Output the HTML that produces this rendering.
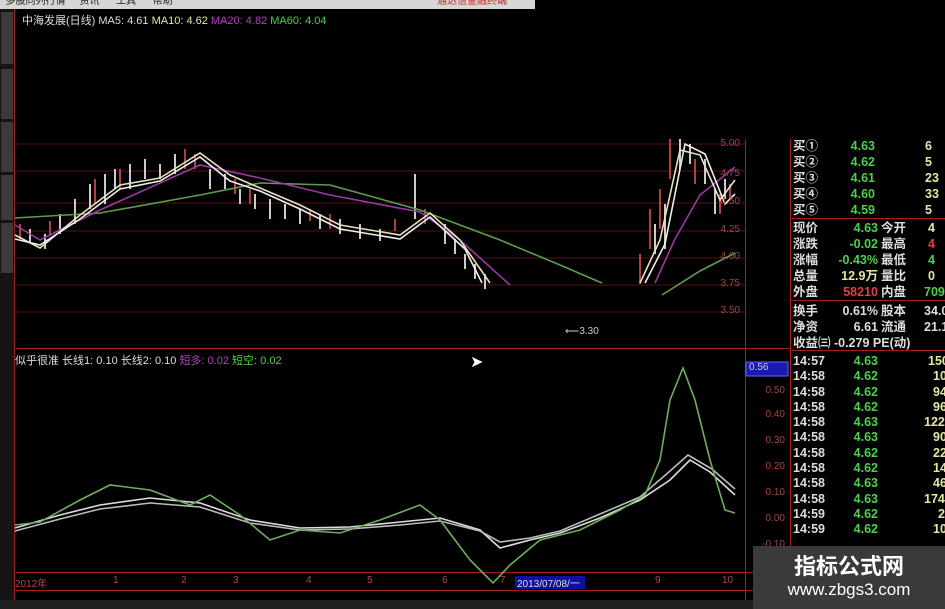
<!DOCTYPE html>
<html><head><meta charset="utf-8"><style>
body{margin:0;width:945px;height:609px;overflow:hidden;background:#000;font-family:"Liberation Sans","Noto Sans CJK SC",sans-serif;position:relative}
.a{position:absolute;white-space:nowrap}
.r{font-size:12.5px;font-weight:bold;line-height:15px}
.w{color:#ddd}.g{color:#4cd04c}.y{color:#e6e6a0}.rd{color:#e04040}
.ax{color:#a04848;font-size:10px;text-align:right;width:40px}
</style></head><body>
<div class="a" style="left:0;top:0;width:535px;height:9px;background:#d6d6d2;font-size:10px;line-height:4px;overflow:hidden;color:#222">&nbsp;&nbsp;多股同列行情 &nbsp;&nbsp;&nbsp;&nbsp;资讯&nbsp;&nbsp;&nbsp;&nbsp;&nbsp;&nbsp;工具&nbsp;&nbsp;&nbsp;&nbsp;&nbsp;&nbsp;帮助<span style="position:absolute;left:437px;color:#c02020">通达信金融终端</span></div>
<svg class="a" style="left:0;top:9px" width="945" height="600">
<rect x="0" y="0" width="14" height="600" fill="#151515"/>
<g fill="#3a3a3a"><rect x="1" y="3" width="12" height="52"/><rect x="1" y="60" width="12" height="50"/><rect x="1" y="113" width="12" height="50"/><rect x="1" y="166" width="12" height="45"/><rect x="1" y="214" width="12" height="50"/></g>
<g stroke="#5a1010" stroke-width="1"><line x1="15" y1="135" x2="745" y2="135"/><line x1="15" y1="162" x2="745" y2="162"/><line x1="15" y1="194" x2="745" y2="194"/><line x1="15" y1="222" x2="745" y2="222"/><line x1="15" y1="249" x2="745" y2="249"/><line x1="15" y1="276" x2="745" y2="276"/><line x1="15" y1="303" x2="745" y2="303"/></g>
<g stroke="#a02020" stroke-width="1" fill="none"><line x1="14.5" y1="0" x2="14.5" y2="591"/><line x1="745.5" y1="130" x2="745.5" y2="591"/><line x1="790.5" y1="130" x2="790.5" y2="591"/><line x1="15" y1="339.5" x2="790" y2="339.5"/><line x1="15" y1="563.5" x2="790" y2="563.5"/><line x1="15" y1="581.5" x2="790" y2="581.5"/><line x1="790" y1="209.5" x2="945" y2="209.5"/><line x1="790" y1="291.5" x2="945" y2="291.5"/><line x1="790" y1="341.5" x2="945" y2="341.5"/></g>
<rect x="515" y="567" width="70" height="13" fill="#1010a0"/>
<rect x="746" y="353" width="42" height="14" fill="#1a1ab0" stroke="#6060ff"/>
<!-- candles -->
<g stroke="#ccc" stroke-width="2">
<path d="M30 220v14M45 225v15M60 205v20M75 190v25M90 175v25M105 165v30M115 160v20M130 155v25M145 150v20M160 155v15M175 145v20M210 160v20M225 165v15M240 180v15M255 185v15M270 190v20M285 195v15M300 200v15M320 205v15M340 210v15M360 215v15M380 220v12M415 165v45M445 215v20M455 230v15M465 245v15M475 255v15M485 265v15M655 215v30M665 195v45M680 130v30M690 135v20M705 150v25M715 180v25M725 170v20"/>
</g>
<g stroke="#b04040" stroke-width="2">
<path d="M20 215v15M50 212v15M95 170v25M120 160v20M185 140v20M195 145v15M235 170v15M250 180v15M310 200v12M330 205v15M395 210v12M425 200v15M640 245v30M650 200v40M660 180v40M670 130v40M695 150v25M720 185v20M730 175v15"/>
</g>
<g fill="none" stroke-width="1.6">
<polyline stroke="#5c9e4a" points="15,209 100,204 200,186 260,174 330,176 420,201 500,231 560,256 602,274"/>
<polyline stroke="#5c9e4a" points="662,286 700,262 735,244"/>
<polyline stroke="#9a3aa0" points="15,216 40,231 100,201 200,156 260,169 330,186 420,203 460,231 510,276"/>
<polyline stroke="#9a3aa0" points="655,274 675,230 700,186 735,158"/>
<polyline stroke="#e8e0c0" points="15,226 40,239 80,206 120,176 160,169 200,144 230,166 260,179 300,196 340,216 400,226 430,204 460,231 490,274"/>
<polyline stroke="#eee" points="15,230 40,236 80,210 120,180 160,172 200,148 230,172 260,182 300,200 340,220 400,230 430,208 465,240 482,274"/>
<polyline stroke="#e8e0c0" points="640,274 660,231 680,141 700,146 720,191 735,171"/>
<polyline stroke="#eee" points="645,274 665,235 685,135 705,145 725,195 735,185"/>
<!-- indicator -->
<polyline stroke="#ddd" points="15,519 60,506 100,496 150,489 200,494 250,511 300,519 350,518 400,513 440,509 480,521 500,539 530,531 560,524 600,509 640,491 670,471 690,451 710,463 735,486"/>
<polyline stroke="#bbb" points="15,522 60,510 100,500 150,494 200,498 250,514 300,521 350,520 400,516 440,512 480,522 500,533 530,529 560,522 600,505 640,488 670,462 688,446 712,460 735,480"/>
<polyline stroke="#6cb05a" points="15,516 40,513 80,491 110,476 150,481 190,496 210,486 240,506 270,531 300,521 340,524 380,511 420,496 440,511 470,551 493,574 510,556 540,531 580,521 620,501 645,486 660,451 670,391 683,359 695,391 710,451 725,501 735,504"/>
</g>
</svg>
<div class="a" style="left:22px;top:12px;font-size:11px"><span class="w">中海发展(日线) MA5: 4.61</span> <span class="y">MA10: 4.62</span> <span style="color:#b040c0">MA20: 4.82</span> <span class="g">MA60: 4.04</span></div>
<div class="a" style="left:15px;top:352px;font-size:11px"><span class="w">似乎很准 长线1: 0.10 长线2: 0.10</span> <span style="color:#b040c0">短多: 0.02</span> <span class="g">短空: 0.02</span></div>
<div class="a" style="left:565px;top:326px;font-size:10px;color:#ccc">⟵3.30</div>
<div class="a" style="left:470px;top:352px;color:#fff;font-size:16px">➤</div>
<div class="a ax" style="left:700px;top:138px">5.00</div><div class="a ax" style="left:700px;top:168px">4.75</div><div class="a ax" style="left:700px;top:196px">4.50</div><div class="a ax" style="left:700px;top:224px">4.25</div><div class="a ax" style="left:700px;top:251px">4.00</div><div class="a ax" style="left:700px;top:278px">3.75</div><div class="a ax" style="left:700px;top:305px">3.50</div>
<div class="a" style="left:749px;top:362px;color:#ccc;font-size:10px">0.56</div>
<div class="a ax" style="left:745px;top:385px">0.50</div><div class="a ax" style="left:745px;top:409px">0.40</div><div class="a ax" style="left:745px;top:435px">0.30</div><div class="a ax" style="left:745px;top:461px">0.20</div><div class="a ax" style="left:745px;top:487px">0.10</div><div class="a ax" style="left:745px;top:513px">0.00</div><div class="a ax" style="left:745px;top:539px">-0.10</div>
<div class="a" style="left:0;top:575px;width:760px;font-size:10px;color:#b04848">
<span class="a" style="left:15px">2012年</span><span class="a" style="left:113px">1</span><span class="a" style="left:181px">2</span><span class="a" style="left:233px">3</span><span class="a" style="left:306px">4</span><span class="a" style="left:367px">5</span><span class="a" style="left:442px">6</span><span class="a" style="left:500px">7</span><span class="a" style="left:517px;color:#ddd">2013/07/08/一</span><span class="a" style="left:655px">9</span><span class="a" style="left:722px">10</span></div>
<div class="a" style="left:0;top:600px;width:760px;height:9px;background:#202020"></div>
<div class="a r" style="left:793px;top:138px;line-height:16px">
<div class="w">买①</div><div class="w">买②</div><div class="w">买③</div><div class="w">买④</div><div class="w">买⑤</div></div>
<div class="a r g" style="left:830px;top:138px;line-height:16px;width:45px;text-align:right">4.63<br>4.62<br>4.61<br>4.60<br>4.59</div>
<div class="a r y" style="left:925px;top:138px;line-height:16px">6<br>5<br>23<br>33<br>5</div>
<div class="a r" style="left:793px;top:220px;line-height:16px;width:160px">
<div><span class="w">现价</span><span class="a g" style="left:40px;width:45px;text-align:right">4.63</span><span class="a w" style="left:88px">今开</span><span class="a y" style="left:135px">4</span></div>
<div><span class="w">涨跌</span><span class="a g" style="left:30px;width:55px;text-align:right">-0.02</span><span class="a w" style="left:88px">最高</span><span class="a rd" style="left:135px">4</span></div>
<div><span class="w">涨幅</span><span class="a g" style="left:25px;width:60px;text-align:right">-0.43%</span><span class="a w" style="left:88px">最低</span><span class="a g" style="left:135px">4</span></div>
<div><span class="w">总量</span><span class="a y" style="left:25px;width:60px;text-align:right">12.9万</span><span class="a w" style="left:88px">量比</span><span class="a y" style="left:135px">0</span></div>
<div><span class="w">外盘</span><span class="a rd" style="left:25px;width:60px;text-align:right">58210</span><span class="a w" style="left:88px">内盘</span><span class="a g" style="left:131px">709</span></div></div>
<div class="a r" style="left:793px;top:303px;line-height:16px;width:160px">
<div><span class="w">换手</span><span class="a w" style="left:25px;width:60px;text-align:right">0.61%</span><span class="a w" style="left:88px">股本</span><span class="a w" style="left:131px">34.0</span></div>
<div><span class="w">净资</span><span class="a w" style="left:25px;width:60px;text-align:right">6.61</span><span class="a w" style="left:88px">流通</span><span class="a w" style="left:131px">21.1</span></div>
<div class="w">收益㈢ -0.279 PE(动)</div></div>
<div class="a r" style="left:793px;top:354px;line-height:15.3px;width:160px">
<div class="w">14:57<span class="a g" style="left:40px;width:45px;text-align:right">4.63</span><span class="a y" style="left:135px">150</span></div>
<div class="w">14:58<span class="a g" style="left:40px;width:45px;text-align:right">4.62</span><span class="a y" style="left:140px">10</span></div>
<div class="w">14:58<span class="a g" style="left:40px;width:45px;text-align:right">4.62</span><span class="a y" style="left:140px">94</span></div>
<div class="w">14:58<span class="a g" style="left:40px;width:45px;text-align:right">4.62</span><span class="a y" style="left:140px">96</span></div>
<div class="w">14:58<span class="a g" style="left:40px;width:45px;text-align:right">4.63</span><span class="a y" style="left:131px">122</span></div>
<div class="w">14:58<span class="a g" style="left:40px;width:45px;text-align:right">4.63</span><span class="a y" style="left:140px">90</span></div>
<div class="w">14:58<span class="a g" style="left:40px;width:45px;text-align:right">4.62</span><span class="a y" style="left:140px">22</span></div>
<div class="w">14:58<span class="a g" style="left:40px;width:45px;text-align:right">4.62</span><span class="a y" style="left:140px">14</span></div>
<div class="w">14:58<span class="a g" style="left:40px;width:45px;text-align:right">4.63</span><span class="a y" style="left:140px">46</span></div>
<div class="w">14:58<span class="a g" style="left:40px;width:45px;text-align:right">4.63</span><span class="a y" style="left:131px">174</span></div>
<div class="w">14:59<span class="a g" style="left:40px;width:45px;text-align:right">4.62</span><span class="a y" style="left:145px">2</span></div>
<div class="w">14:59<span class="a g" style="left:40px;width:45px;text-align:right">4.62</span><span class="a y" style="left:140px">10</span></div>
</div>
<div class="a" style="left:753px;top:546px;width:192px;height:63px;background:#3a3a3a"></div>
<div class="a" style="left:753px;top:549px;width:192px;text-align:center;color:#fff;font-size:22px;font-weight:bold">指标公式网</div>
<div class="a" style="left:753px;top:580px;width:192px;text-align:center;color:#fff;font-size:17px">www.zbgs3.com</div>
</body></html>
